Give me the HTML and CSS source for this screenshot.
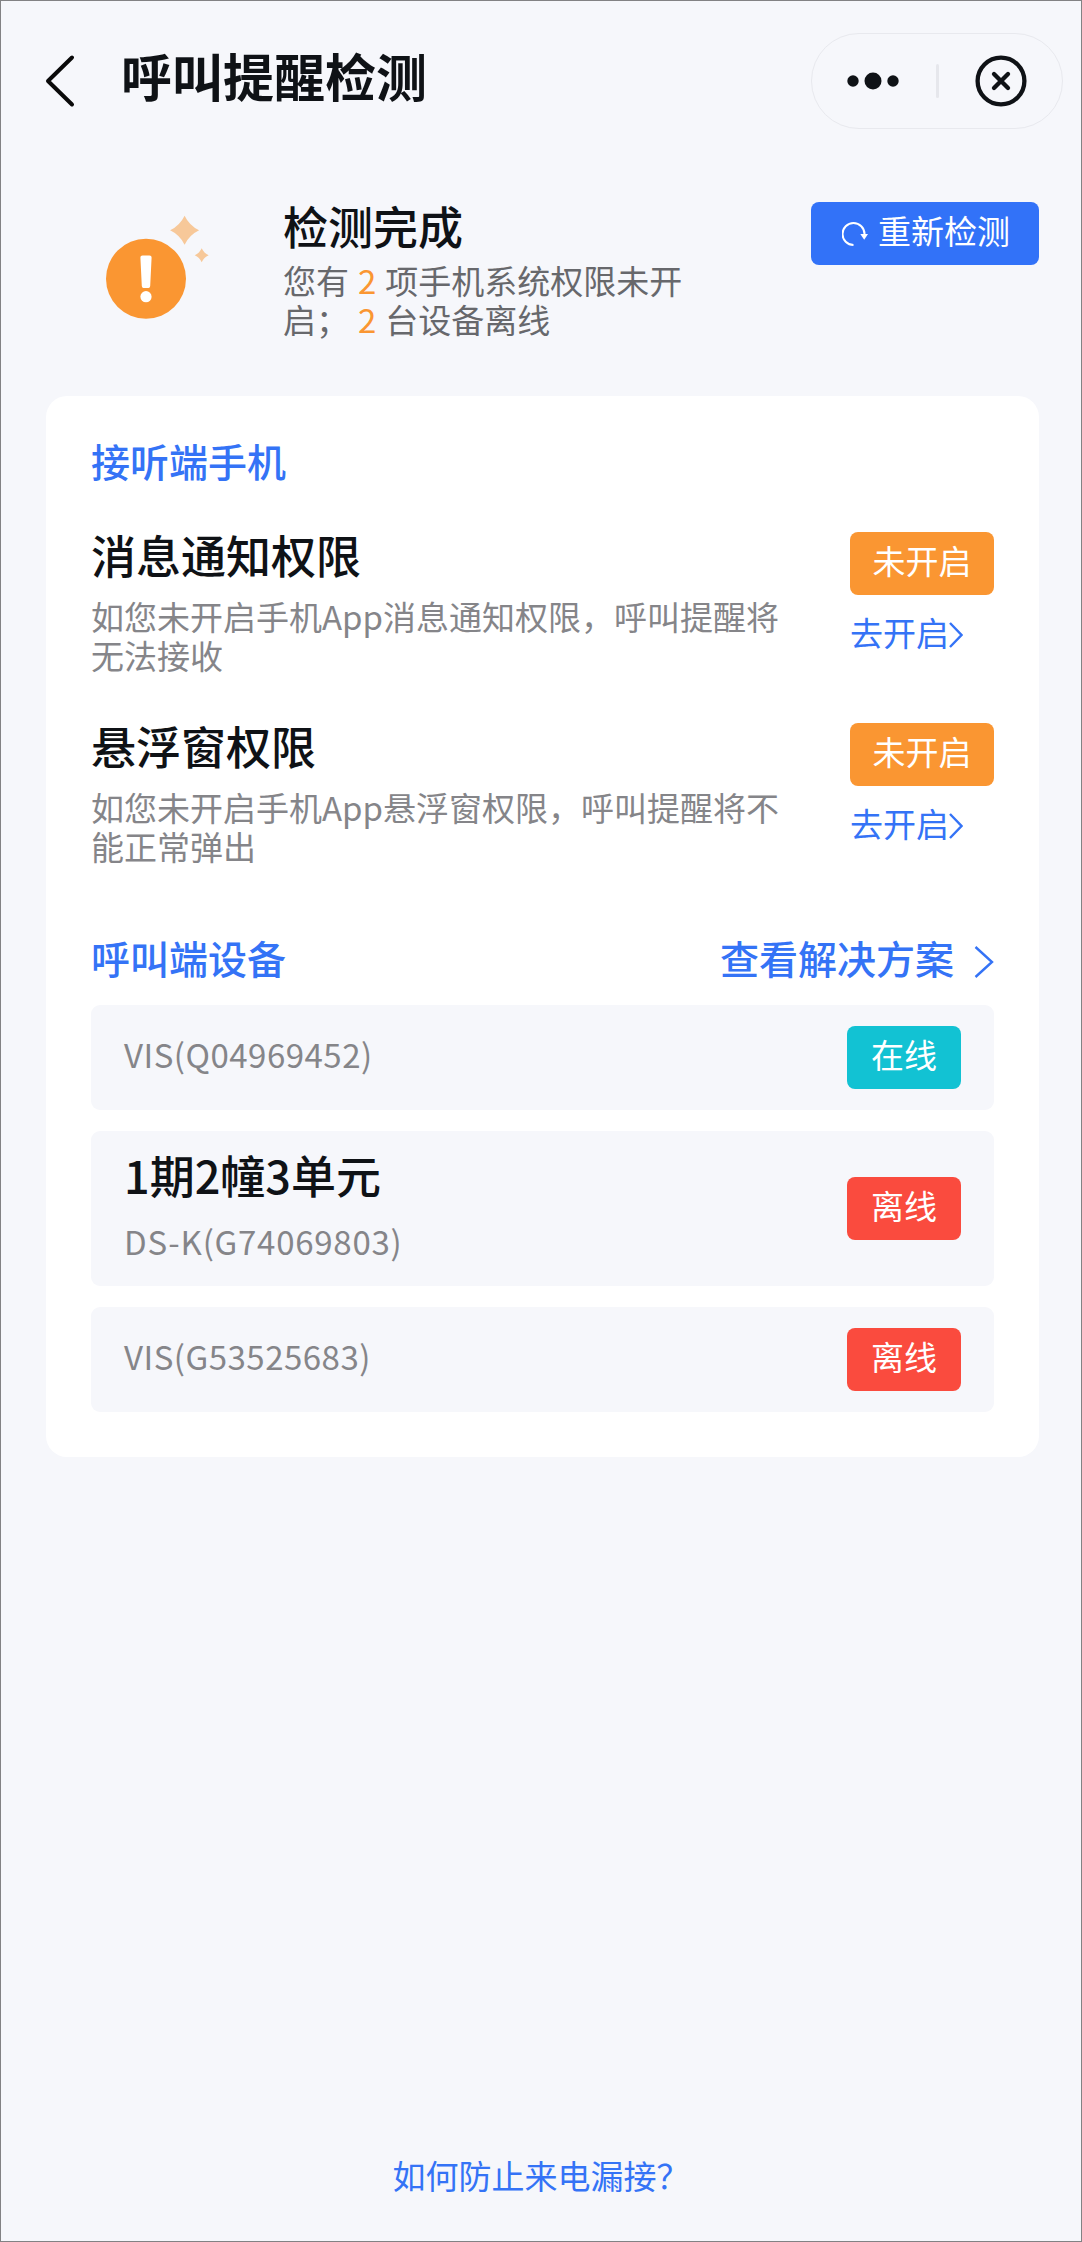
FILE: index.html
```html
<!DOCTYPE html>
<html lang="zh-CN">
<head>
    <meta charset="UTF-8">
    <meta name="viewport" content="width=device-width, initial-scale=1.0">
    <title>呼叫提醒检测</title>
    <link rel="stylesheet" href="styles.css">
</head>
<body>
    <header class="navbar">
        <svg class="back-icon" width="32" height="54" viewBox="0 0 32 54">
            <path d="M29 3.500 L5 27 L29 50.500" />
        </svg>
        <h1>呼叫提醒检测</h1>
        <div class="capsule">
            <svg class="more-icon" width="52" height="18" viewBox="0 0 52 18">
                <circle cx="6" cy="9" r="5.700" />
                <circle cx="26" cy="9" r="8.500" />
                <circle cx="46" cy="9" r="5.700" />
            </svg>
            <span class="divider"></span>
            <svg class="close-icon" width="52" height="52" viewBox="0 0 52 52">
                <circle cx="26" cy="26" r="23.400" />
                <path d="M19 19 L33 33 M33 19 L19 33" />
            </svg>
        </div>
    </header>

    <section class="summary">
        <svg class="status-icon" width="104" height="106" viewBox="0 0 104 106">
            <circle cx="40" cy="64.700" r="40" fill="#fa9632" />
            <path d="M36.500 41.500 H43.500 Q45.700 41.500 45.600 43.500 L44.200 72 Q44 74 42.500 74 H37.500 Q36 74 35.800 72 L34.400 43.500 Q34.300 41.500 36.500 41.500 Z" fill="#fff" />
            <circle cx="40" cy="82.700" r="5.600" fill="#fff" />
            <path d="M78.600 1.800 Q83.300 11.600 93.100 16.300 Q83.300 21 78.600 30.800 Q73.900 21 64.100 16.300 Q73.900 11.600 78.600 1.800 Z" fill="#f7c899" />
            <path d="M95.700 34.300 Q97.900 39.100 102.700 41.300 Q97.900 43.500 95.700 48.300 Q93.500 43.500 88.700 41.300 Q93.500 39.100 95.700 34.300 Z" fill="#f7c899" />
        </svg>
        <div class="summary-text">
            <h2>检测完成</h2>
            <p>您有 <em>2</em> 项手机系统权限未开启； <em>2</em> 台设备离线</p>
        </div>
        <button class="retry" type="button">
            <svg width="26" height="26" viewBox="0 0 26 26">
                <path d="M11.500 24 A11 11 0 1 1 22.500 13" fill="none" stroke="#fff" stroke-width="2" />
                <path d="M18.300 13 H26 L22.200 18.800 Z" fill="#fff" />
            </svg>
            <span>重新检测</span>
        </button>
    </section>

    <main class="card">
        <h3>接听端手机</h3>
        <div class="permission">
            <div class="permission-text">
                <h4>消息通知权限</h4>
                <p>如您未开启手机App消息通知权限，呼叫提醒将无法接收</p>
            </div>
            <div class="permission-action">
                <span class="tag warning">未开启</span>
                <a class="open-link" href="#">去开启<svg width="14" height="26" viewBox="0 0 14 26"><path d="M1 1 L12.500 13 L1 25" /></svg></a>
            </div>
        </div>
        <div class="permission">
            <div class="permission-text">
                <h4>悬浮窗权限</h4>
                <p>如您未开启手机App悬浮窗权限，呼叫提醒将不能正常弹出</p>
            </div>
            <div class="permission-action">
                <span class="tag warning">未开启</span>
                <a class="open-link" href="#">去开启<svg width="14" height="26" viewBox="0 0 14 26"><path d="M1 1 L12.500 13 L1 25" /></svg></a>
            </div>
        </div>

        <div class="device-header">
            <h3>呼叫端设备</h3>
            <a class="solution-link" href="#">查看解决方案<svg width="20" height="34" viewBox="0 0 20 34"><path d="M1.500 2 L18 17 L1.500 32" /></svg></a>
        </div>
        <ul class="devices">
            <li class="device">
                <span class="device-id">VIS(Q04969452)</span>
                <span class="tag online">在线</span>
            </li>
            <li class="device named">
                <div>
                    <h4>1期2幢3单元</h4>
                    <span class="device-id">DS-K(G74069803)</span>
                </div>
                <span class="tag offline">离线</span>
            </li>
            <li class="device">
                <span class="device-id">VIS(G53525683)</span>
                <span class="tag offline">离线</span>
            </li>
        </ul>
    </main>

    <a class="help-link" href="#">如何防止来电漏接？</a>
</body>
</html>
```
FILE: styles.css
```css
* {
    box-sizing: border-box;
    margin: 0;
    padding: 0;
}
body {
    font-family: "Noto Sans CJK SC", "Noto Sans", sans-serif;
    font-size: 33px;
    display: flex;
    flex-direction: column;
    height: 2242px;
    border: 1px solid #828284;
    background-color: #f6f7fb;
    color: #0f1216;
}
a {
    color: #3473f6;
    text-decoration: none;
}
svg {
    flex-shrink: 0;
}

/* Top bar */
.navbar {
    display: flex;
    align-items: center;
    height: 96px;
    margin-top: 32px;
    padding: 0 18px 0 42px;
}
.back-icon {
    fill: none;
    stroke: #0a0a0a;
    stroke-width: 4;
    stroke-linecap: round;
    stroke-linejoin: round;
}
.navbar h1 {
    flex: 1;
    margin-left: 46px;
    padding-bottom: 12px;
    font-size: 51px;
    line-height: 60px;
    font-weight: 700;
}
.capsule {
    display: flex;
    align-items: center;
    width: 252px;
    height: 96px;
    padding-left: 35px;
    border: 1.5px solid #e8e9ee;
    border-radius: 48px;
}
.more-icon {
    fill: #0f1216;
}
.divider {
    width: 3px;
    height: 34px;
    margin: 0 36px 0 37px;
    border-radius: 2px;
    background-color: #e6e7ec;
}
.close-icon {
    fill: none;
    stroke: #0f1216;
    stroke-width: 4.3;
    stroke-linecap: round;
}

/* Check result */
.summary {
    display: flex;
    align-items: flex-start;
    height: 194px;
    margin-top: 73px;
    padding: 0 42px 0 105px;
}
.status-icon {
    margin-top: 12px;
}
.summary-text {
    width: 410px;
    margin-left: 73px;
}
.summary h2 {
    font-size: 45px;
    line-height: 47px;
    font-weight: 500;
}
.summary p {
    margin-top: 12px;
    line-height: 39px;
    color: #67686c;
}
.summary em {
    margin: 0 1.5px;
    font-style: normal;
    color: #fa9632;
}
.retry {
    display: flex;
    align-items: center;
    width: 228px;
    height: 63px;
    margin-left: auto;
    padding-left: 31px;
    border: none;
    border-radius: 8px;
    background-color: #3272f8;
    color: white;
    font-family: inherit;
    font-size: 33px;
}
.retry span {
    margin-left: 10px;
    padding-bottom: 7px;
    line-height: 40px;
}

/* Main card */
.card {
    width: 993px;
    height: 1061px;
    margin-left: 45px;
    padding: 44px 45px 0;
    border-radius: 21px;
    background-color: white;
}
.card h3,
.solution-link {
    font-size: 39px;
    line-height: 40px;
    font-weight: 500;
    color: #3473f6;
}
.card h4 {
    font-size: 45px;
    line-height: 46px;
    font-weight: 500;
}
.permission {
    display: flex;
    justify-content: space-between;
    height: 142px;
    margin-top: 49px;
}
.card h3 + .permission {
    margin-top: 52px;
}
.permission-text {
    width: 700px;
}
.permission-text p {
    margin-top: 19px;
    line-height: 39px;
    color: #858589;
}
.permission-action {
    width: 144px;
}
.tag {
    display: block;
    height: 63px;
    border-radius: 8px;
    line-height: 56px;
    text-align: center;
    color: white;
}
.warning {
    background-color: #fa9632;
}
.online {
    background-color: #12c2d3;
}
.offline {
    background-color: #fa4b3e;
}
.open-link {
    display: flex;
    align-items: center;
    margin-top: 17px;
    line-height: 40px;
}
.open-link svg,
.solution-link svg {
    fill: none;
    stroke: #3473f6;
    stroke-width: 2.4;
}
.open-link svg {
    margin-top: 5px;
}

/* Device list */
.device-header {
    display: flex;
    justify-content: space-between;
    height: 40px;
    margin-top: 72px;
}
.solution-link {
    display: flex;
    align-items: center;
}
.solution-link svg {
    margin: 9px 0 0 20px;
}
.devices {
    display: flex;
    flex-direction: column;
    gap: 21px;
    margin-top: 28px;
    list-style: none;
}
.device {
    display: flex;
    align-items: center;
    justify-content: space-between;
    height: 105px;
    padding: 0 33px;
    border-radius: 9px;
    background-color: #f6f7fb;
}
.device .tag {
    width: 114px;
}
.device-id {
    display: block;
    padding-bottom: 7px;
    line-height: 44px;
    letter-spacing: 0.5px;
    color: #858589;
}
.named {
    height: 155px;
}
.named h4 {
    margin-top: 5px;
}
.named .device-id {
    margin-top: 21px;
    letter-spacing: 0.75px;
}

.help-link {
    margin: auto auto 46px;
    line-height: 40px;
}
```
